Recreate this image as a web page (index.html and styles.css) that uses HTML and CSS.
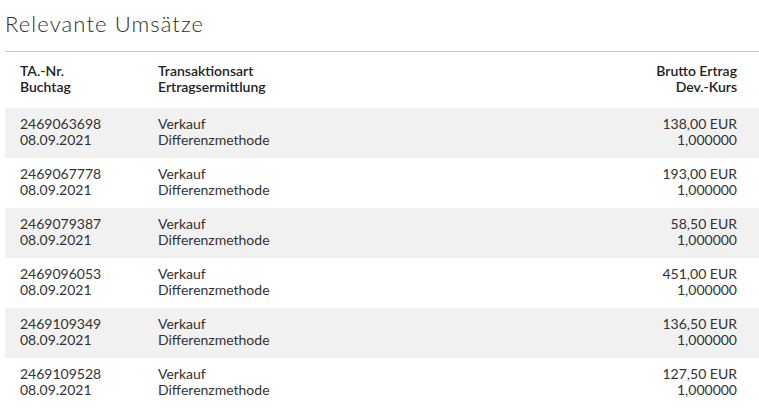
FILE: index.html
```html
<!DOCTYPE html>
<html lang="de">
<head>
<meta charset="utf-8">
<link rel="stylesheet" href="styles.css">
</head>
<body>
<div class="panel">
  <h1 class="title">Relevante Umsätze</h1>
  <div class="table">
    <div class="row head">
      <div class="c1">TA.-Nr.<br>Buchtag</div>
      <div class="c2">Transaktionsart<br>Ertragsermittlung</div>
      <div class="c3">Brutto Ertrag<br>Dev.-Kurs</div>
    </div>
    <div class="row odd">
      <div class="c1">2469063698<br>08.09.2021</div>
      <div class="c2">Verkauf<br>Differenzmethode</div>
      <div class="c3">138,00 EUR<br>1,000000</div>
    </div>
    <div class="row">
      <div class="c1">2469067778<br>08.09.2021</div>
      <div class="c2">Verkauf<br>Differenzmethode</div>
      <div class="c3">193,00 EUR<br>1,000000</div>
    </div>
    <div class="row odd">
      <div class="c1">2469079387<br>08.09.2021</div>
      <div class="c2">Verkauf<br>Differenzmethode</div>
      <div class="c3">58,50 EUR<br>1,000000</div>
    </div>
    <div class="row">
      <div class="c1">2469096053<br>08.09.2021</div>
      <div class="c2">Verkauf<br>Differenzmethode</div>
      <div class="c3">451,00 EUR<br>1,000000</div>
    </div>
    <div class="row odd">
      <div class="c1">2469109349<br>08.09.2021</div>
      <div class="c2">Verkauf<br>Differenzmethode</div>
      <div class="c3">136,50 EUR<br>1,000000</div>
    </div>
    <div class="row">
      <div class="c1">2469109528<br>08.09.2021</div>
      <div class="c2">Verkauf<br>Differenzmethode</div>
      <div class="c3">127,50 EUR<br>1,000000</div>
    </div>
  </div>
</div>
</body>
</html>
```
FILE: styles.css
```css
html, body {
  margin: 0;
  padding: 0;
  background: #fff;
}
body {
  font-family: Lato, "Open Sans", sans-serif;
  color: #333;
  overflow: hidden;
}
.panel {
  padding-left: 5px;
}
.title {
  margin: 0;
  height: 52px;
  box-sizing: border-box;
  padding-top: 10px;
  font-size: 22px;
  font-weight: 300;
  letter-spacing: 1.1px;
  line-height: 28px;
  color: #2e2e2e;
  border-bottom: 1px solid #c8c8c8;
}
.row {
  display: grid;
  grid-template-columns: 138px 1fr auto;
  height: 50px;
  box-sizing: border-box;
  padding: 8px 22px 0 15px;
  font-size: 14px;
  line-height: 16px;
  color: #333;
}
.row.head {
  height: 56px;
  padding-top: 11px;
  font-weight: 600;
  color: #222;
}
.row.odd {
  background: #f1f1f1;
}
.c3 {
  text-align: right;
}
```
